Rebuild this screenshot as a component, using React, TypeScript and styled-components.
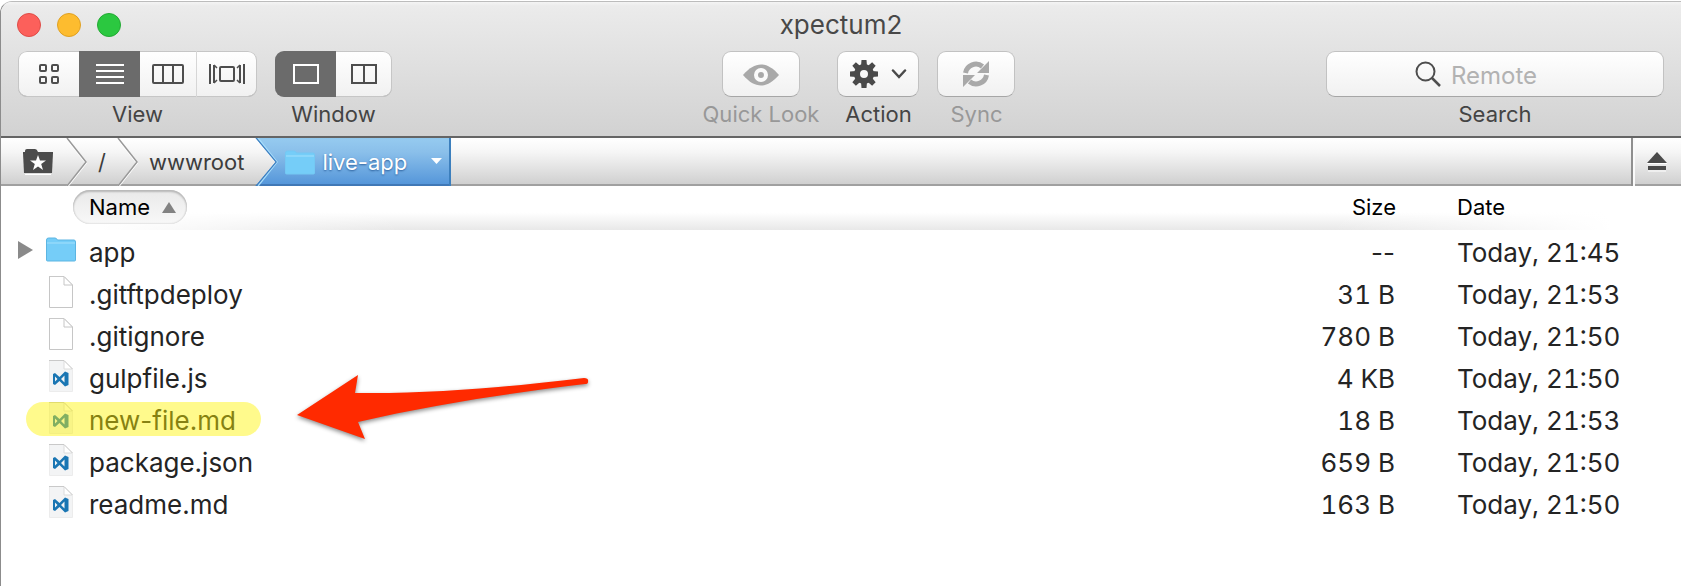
import React from "react";
import styled, { createGlobalStyle, css } from "styled-components";

const GlobalStyle = createGlobalStyle`
  *, *::before, *::after { box-sizing: border-box; }
  body {
    margin: 0;
    background: #fff;
    font-family: Inter, "Liberation Sans", sans-serif;
    color: #242424;
  }
  button, input {
    font: inherit;
    color: inherit;
    margin: 0;
    padding: 0;
    border: 0;
    background: none;
  }
  svg { display: block; flex: none; }
`;

const Window = styled.div`
  min-height: calc(100vh - 1px);
  margin-top: 1px;
  border-left: 1px solid #8c8c8c;
  border-top: 1px solid #bcbcbc;
  border-top-left-radius: 12px;
  overflow: hidden;
  background: #fff;
`;

const Chrome = styled.header`
  padding: 8px 17px 0 17px;
  height: 136px;
  background: linear-gradient(#f4f4f4 0, #ebebeb 4px, #d2d2d2 100%);
  border-bottom: 2px solid #656565;
`;

const TitleBar = styled.div`
  display: grid;
  grid-template-columns: 1fr auto 1fr;
  align-items: center;
  height: 30px;
`;

const Lights = styled.div`
  display: flex;
  gap: 16px;
  margin-left: -1px;
`;

const Light = styled.button<{ $fill: string; $edge: string }>`
  width: 24px;
  height: 24px;
  border-radius: 50%;
  background: ${(p) => p.$fill};
  border: 1px solid ${(p) => p.$edge};
`;

const Title = styled.h1`
  margin: 0;
  font-size: 26px;
  line-height: 30px;
  font-weight: 400;
  color: #484848;
`;

const Toolbar = styled.div`
  display: flex;
  justify-content: space-between;
  padding-top: 11px;
`;

const ToolCluster = styled.div`
  display: flex;
  gap: 18px;
`;

const Tool = styled.div<{ $dim?: boolean }>`
  display: flex;
  flex-direction: column;
  align-items: center;
  gap: 3px;
  color: ${(p) => (p.$dim ? "#989898" : "#444")};
`;

const ToolLabel = styled.label`
  font-size: 22px;
  line-height: 28px;
  white-space: nowrap;
`;

const raised = css`
  height: 46px;
  border: 1px solid #c2c2c2;
  border-bottom-color: #a6a6a6;
  border-radius: 9px;
  background: linear-gradient(#fff, #f1f1f1);
`;

const Segments = styled.div`
  ${raised}
  display: flex;
  overflow: hidden;
  border: 0;
  box-shadow: inset 0 0 0 1px #c6c6c6, inset 0 -1px 0 #a9a9a9;
`;

const Segment = styled.button<{ $on?: boolean; $divided?: boolean; $wide?: boolean }>`
  display: grid;
  place-items: center;
  width: ${(p) => (p.$wide ? 61 : 56)}px;
  color: ${(p) => (p.$on ? "#fff" : "#4e4e4e")};
  background: ${(p) => (p.$on ? "#6b6b6b" : "transparent")};
  border-left: ${(p) => (p.$divided ? "1px solid #d6d6d6" : "0")};
`;

const PushButton = styled.button<{ $wide?: boolean }>`
  ${raised}
  display: flex;
  align-items: center;
  justify-content: center;
  gap: 13px;
  width: ${(p) => (p.$wide ? 82 : 78)}px;
`;

const SearchBox = styled.div`
  ${raised}
  display: flex;
  align-items: center;
  gap: 10px;
  width: 338px;
  padding-left: 88px;
  color: #4e4e4e;

  input {
    flex: 1;
    min-width: 0;
    padding-top: 3px;
    font-size: 24px;
    line-height: 30px;
    outline: none;
  }
  input::placeholder { color: #b2b2b2; opacity: 1; }
`;

const PathBar = styled.nav`
  display: flex;
  height: 48px;
  background: linear-gradient(#fff, #f6f6f6 30%, #d0d0d0);
  border-bottom: 2px solid #a0a0a0;
`;

const Crumb = styled.button<{ $active?: boolean }>`
  display: flex;
  align-items: center;
  height: 48px;
  font-size: 22px;
  line-height: 28px;
  color: #3c3c3c;
  white-space: nowrap;
  ${(p) =>
    p.$active &&
    css`
      gap: 7px;
      padding-right: 7px;
      color: #fff;
      text-shadow: 0 1px 2px #2c609c;
      background: linear-gradient(#8fc8ee 0, #94c9ef 2px, #8abfea 30%, #5294d9);
      border-right: 2px solid #3c7fbd;
      box-shadow: inset 0 -2px 0 #4078b6;
      clip-path: polygon(0 0, 100% 0, 100% 100%, 0 100%, 20px 50%);
    `}
`;

const CrumbText = styled.span<{ $grow?: boolean }>`
  padding: 0 ${(p) => (p.$grow ? 17 : 11)}px 0 ${(p) => (p.$grow ? 0 : 11)}px;
`;

const HomeMark = styled.span`
  padding: 0 13px 0 22px;
`;

const Eject = styled.button`
  display: grid;
  place-items: center;
  width: 50px;
  height: 48px;
  margin-left: auto;
  border-left: 2px solid #8f8f8f;
  box-shadow: inset 2px 0 0 #fafafa;
  color: #4a4a4a;
`;

const Files = styled.table`
  width: 100%;
  border-collapse: collapse;
  table-layout: fixed;
  font-size: 26px;
  line-height: 32px;
`;

const HeadRow = styled.tr`
  height: 44px;
  background:
    linear-gradient(to right, #fff 100px, transparent 400px, transparent calc(100% - 350px), #fff calc(100% - 70px)),
    linear-gradient(#fff 60%, #e8e8e8);
`;

const Head = styled.th<{ $size?: boolean; $date?: boolean }>`
  width: ${(p) => (p.$size ? "220px" : p.$date ? "224px" : "auto")};
  padding: 0 ${(p) => (p.$size ? 61 : 0)}px 2px 0;
  text-align: ${(p) => (p.$size ? "right" : "left")};
  font-size: 22px;
  line-height: 28px;
  font-weight: 400;
  color: #000;
`;

const SortButton = styled.button`
  display: flex;
  align-items: center;
  gap: 12px;
  height: 34px;
  margin-left: 72px;
  padding: 0 11px 0 16px;
  border-radius: 17px;
  background: linear-gradient(#e9e9e9, #f8f8f8);
  box-shadow: inset 0 2px 2px #b8b8b8, inset 0 0 2px #b8b8b8;
`;

const Row = styled.tr`
  height: 42px;
`;

const NameCell = styled.td`
  position: relative;
  padding: 2px 0 0;
`;

const NameLine = styled.div`
  display: flex;
  align-items: center;
  height: 40px;
  padding-left: 16px;
`;

const FileName = styled.span`
  padding-top: 2px;
`;

const Disclosure = styled.span`
  width: 28px;
  padding-bottom: 5px;
`;

const IconSlot = styled.span`
  display: grid;
  place-items: center;
  width: 32px;
  height: 38px;
  margin-right: 12px;
  padding-bottom: 5px;
`;

const SizeCell = styled.td<{ $empty: boolean }>`
  padding: 4px 62px 0 0;
  text-align: right;
  font-variant-numeric: ${(p) => (p.$empty ? "normal" : "tabular-nums")};
`;

const DateCell = styled.td`
  padding: 4px 0 0;
  font-variant-numeric: tabular-nums;
`;

const Highlight = styled.span`
  position: absolute;
  left: 25px;
  top: 4px;
  width: 235px;
  height: 34px;
  border-radius: 17px;
  background: rgba(255, 244, 0, 0.45);
`;

const Pointer = styled.svg`
  position: absolute;
  left: 289px;
  top: -23px;
  overflow: visible;
  filter: drop-shadow(0 2px 2px rgba(0, 0, 0, 0.45));
`;

const GridIcon = () => (
  <svg width="22" height="22" fill="none" stroke="currentColor" strokeWidth="2">
    <rect x="2" y="2" width="6" height="6" rx="1" />
    <rect x="14" y="2" width="6" height="6" rx="1" />
    <rect x="2" y="14" width="6" height="6" rx="1" />
    <rect x="14" y="14" width="6" height="6" rx="1" />
  </svg>
);

const ListIcon = () => (
  <svg width="28" height="22" stroke="currentColor" strokeWidth="2">
    <path d="M0 2H28M0 8H28M0 14H28M0 20H28" />
  </svg>
);

const ColumnsIcon = () => (
  <svg width="32" height="22" fill="none" stroke="currentColor" strokeWidth="2">
    <rect x="1" y="2" width="30" height="18" rx="1" />
    <path d="M11 2V20M21 2V20" />
  </svg>
);

const FlowIcon = () => (
  <svg width="36" height="22" fill="none" stroke="currentColor" strokeWidth="2">
    <rect x="11" y="4" width="14" height="14" rx="1" />
    <path d="M1 1V21M35 1V21M5 2V20M31 2V20" />
    <path d="M5 2l3 3M5 20l3-3M31 2l-3 3M31 20l-3-3" strokeWidth="1.500" />
  </svg>
);

const SinglePaneIcon = () => (
  <svg width="26" height="22" fill="none" stroke="currentColor" strokeWidth="2">
    <rect x="1" y="2" width="24" height="18" />
  </svg>
);

const DualPaneIcon = () => (
  <svg width="26" height="22" fill="none" stroke="currentColor" strokeWidth="2">
    <rect x="1" y="2" width="24" height="18" />
    <path d="M13 2V20" />
  </svg>
);

const EyeIcon = () => (
  <svg width="36" height="24" fill="none">
    <path d="M0 13C6 6 12 2.500 18 2.500S30 6 36 13C30 20 24 23.500 18 23.500S6 20 0 13Z" fill="#a9a9a9" />
    <circle cx="18" cy="13" r="5" stroke="#fbfbfb" strokeWidth="4" fill="#a9a9a9" />
  </svg>
);

const GearIcon = () => (
  <svg width="28" height="28" viewBox="-14 -14 28 28" fill="none">
    <circle r="7" stroke="#4a4a4a" strokeWidth="6" />
    {[0, 45, 90, 135].map((a) => (
      <path key={a} d="M-3 -8L-2.500 -14H2.500L3 -8ZM-3 8L-2.500 14H2.500L3 8Z" fill="#4a4a4a" transform={`rotate(${a})`} />
    ))}
  </svg>
);

const ChevronDown = () => (
  <svg width="16" height="10" fill="none" stroke="#4a4a4a" strokeWidth="2.500" strokeLinecap="round">
    <path d="M2 1.500L8 8L14 1.500" />
  </svg>
);

const SyncIcon = () => (
  <svg width="28" height="28" fill="none" stroke="#a9a9a9" strokeWidth="5">
    <path d="M3.500 13A10.500 10.500 0 0 1 20.500 6.500" />
    <path d="M24.500 15A10.500 10.500 0 0 1 7.500 21.500" />
    <path d="M27 1V13H15Z M1 27V15H13Z" fill="#a9a9a9" stroke="none" />
  </svg>
);

const SearchIcon = () => (
  <svg width="26" height="26" fill="none" stroke="currentColor" strokeWidth="2">
    <circle cx="10.500" cy="10.500" r="9" />
    <path d="M17 17L25 25" strokeWidth="2.500" />
  </svg>
);

const StarFolderIcon = () => (
  <svg width="30" height="26">
    <path d="M2 26V25H28V26Z" fill="#fff" />
    <path d="M2 3V2Q2 0 4 0H12Q14 0 15 3H30V5H0V3Z" fill="#4c4c4c" />
    <path d="M0 4H30L29 24H1Z" fill="#4c4c4c" />
    <path d="M15 6L17 11.500H23L18.200 15L20 21L15 17.500L10 21L11.800 15L7 11.500H13Z" fill="#fff" />
  </svg>
);

const Separator = () => (
  <svg width="21" height="48" fill="none">
    <path d="M1 1L20 25L1 49" stroke="#fff" strokeWidth="2" />
    <path d="M1 0L20 24L1 48" stroke="#999" strokeWidth="1.500" />
  </svg>
);

const ActiveEdge = () => (
  <svg width="23" height="48" fill="none">
    <path d="M3 0L22 24L3 48" stroke="#a5dcfb" strokeWidth="1.500" />
    <path d="M0 0L20 24L0 48" stroke="#3e7fc0" strokeWidth="3" />
  </svg>
);

const FolderIcon = ({ edge }: { edge: string }) => (
  <svg width="30" height="25">
    <path d="M0.500 3Q0.500 1 2.500 1H9Q10.500 1 11.500 3H28Q29.500 3 29.500 5V23Q29.500 24 28.500 24H1.500Q0.500 24 0.500 23Z" fill="#75cdf8" stroke={edge} />
    <path d="M1 6H29" stroke="#a4e0fc" strokeWidth="1" />
  </svg>
);

const CaretDown = () => (
  <svg width="11" height="8">
    <path d="M0 0H11L5.500 6Z" fill="#fff" />
  </svg>
);

const EjectIcon = () => (
  <svg width="20" height="20">
    <path d="M10 0L20 11H0Z" fill="currentColor" />
    <path d="M1 14H19V18H1Z" fill="currentColor" />
    <path d="M0 11.500H20M1 19H19" stroke="#fff" />
  </svg>
);

const SortArrow = () => (
  <svg width="14" height="11">
    <path d="M7 0L14 11H0Z" fill="#828282" />
  </svg>
);

const DisclosureArrow = () => (
  <svg width="16" height="18">
    <path d="M1 0L16 9L1 18Z" fill="#8a8a8a" />
  </svg>
);

const DocumentIcon = ({ code }: { code?: boolean }) => (
  <svg width="24" height="32" fill="none">
    <path
      d="M0.500 0.500H15L23.500 9V31.500H0.500Z"
      fill={code ? "#f3f4f5" : "#fff"}
      stroke={code ? "#ececec" : "#c6c6c6"}
    />
    <path d="M15 1V9H23" fill="#fff" stroke={code ? "#dcdcdc" : "#c6c6c6"} />
    <path d="M0 0.500H15L23.500 9" stroke="#c9c9c9" />
    {code && (
      <path
        fillRule="evenodd"
        fill="#1a76b3"
        d="M4 14L6 13L10.500 17L16 11.500L19.500 13V25L16 26.500L10.500 21L6 25L4 24ZM6 16.500V21.500L8.500 19ZM15.500 15.500L12 19L15.500 22.500Z"
      />
    )}
  </svg>
);

type Kind = "folder" | "plain" | "code";
type Entry = { name: string; kind: Kind; size: string; date: string; marked?: boolean };

const entries: Entry[] = [
  { name: "app", kind: "folder", size: "--", date: "Today, 21:45" },
  { name: ".gitftpdeploy", kind: "plain", size: "31 B", date: "Today, 21:53" },
  { name: ".gitignore", kind: "plain", size: "780 B", date: "Today, 21:50" },
  { name: "gulpfile.js", kind: "code", size: "4 KB", date: "Today, 21:50" },
  { name: "new-file.md", kind: "code", size: "18 B", date: "Today, 21:53", marked: true },
  { name: "package.json", kind: "code", size: "659 B", date: "Today, 21:50" },
  { name: "readme.md", kind: "code", size: "163 B", date: "Today, 21:50" },
];

const FileRow = ({ name, kind, size, date, marked }: Entry) => (
  <Row>
    <NameCell>
      <NameLine>
        <Disclosure>
          {kind === "folder" && (
            <button aria-label={`Expand ${name}`}>
              <DisclosureArrow />
            </button>
          )}
        </Disclosure>
        <IconSlot>
          {kind === "folder" ? <FolderIcon edge="#5cb5e2" /> : <DocumentIcon code={kind === "code"} />}
        </IconSlot>
        <FileName>{name}</FileName>
      </NameLine>
      {marked && (
        <>
          <Highlight />
          <Pointer width="300" height="66" aria-hidden="true">
            <path
              d="M7 31L68 -9L65 9C140 10 210 4 294 -6Q299 -6 298 -2Q298 0 295 0C220 9 140 21 68 38L75 55Z"
              transform="translate(0 9)"
              fill="#ff2a00"
            />
          </Pointer>
        </>
      )}
    </NameCell>
    <SizeCell $empty={size === "--"}>{size}</SizeCell>
    <DateCell>{date}</DateCell>
  </Row>
);

export default function App() {
  return (
    <Window>
      <GlobalStyle />
      <Chrome>
        <TitleBar>
          <Lights>
            <Light $fill="#fc605b" $edge="#de4c47" aria-label="Close" />
            <Light $fill="#fdbc2f" $edge="#dfa023" aria-label="Minimize" />
            <Light $fill="#2bc840" $edge="#24a934" aria-label="Zoom" />
          </Lights>
          <Title>xpectum2</Title>
        </TitleBar>
        <Toolbar>
          <ToolCluster>
            <Tool>
              <Segments>
                <Segment $wide aria-label="Icons"><GridIcon /></Segment>
                <Segment $wide $on aria-label="List"><ListIcon /></Segment>
                <Segment aria-label="Columns"><ColumnsIcon /></Segment>
                <Segment $wide $divided aria-label="Cover flow"><FlowIcon /></Segment>
              </Segments>
              <ToolLabel as="span">View</ToolLabel>
            </Tool>
            <Tool>
              <Segments>
                <Segment $wide $on aria-label="Single pane"><SinglePaneIcon /></Segment>
                <Segment aria-label="Dual pane"><DualPaneIcon /></Segment>
              </Segments>
              <ToolLabel as="span">Window</ToolLabel>
            </Tool>
          </ToolCluster>
          <ToolCluster>
            <Tool $dim>
              <PushButton id="look"><EyeIcon /></PushButton>
              <ToolLabel htmlFor="look">Quick Look</ToolLabel>
            </Tool>
            <Tool>
              <PushButton $wide id="action"><GearIcon /><ChevronDown /></PushButton>
              <ToolLabel htmlFor="action">Action</ToolLabel>
            </Tool>
            <Tool $dim>
              <PushButton id="sync"><SyncIcon /></PushButton>
              <ToolLabel htmlFor="sync">Sync</ToolLabel>
            </Tool>
          </ToolCluster>
          <Tool>
            <SearchBox>
              <SearchIcon />
              <input id="search" type="text" placeholder="Remote" />
            </SearchBox>
            <ToolLabel htmlFor="search">Search</ToolLabel>
          </Tool>
        </Toolbar>
      </Chrome>
      <PathBar>
        <Crumb aria-label="Favorites">
          <HomeMark><StarFolderIcon /></HomeMark>
          <Separator />
        </Crumb>
        <Crumb>
          <CrumbText>/</CrumbText>
          <Separator />
        </Crumb>
        <Crumb>
          <CrumbText>wwwroot</CrumbText>
        </Crumb>
        <Crumb $active>
          <ActiveEdge />
          <FolderIcon edge="#74c8f3" />
          <CrumbText $grow>live-app</CrumbText>
          <CaretDown />
        </Crumb>
        <Eject aria-label="Eject"><EjectIcon /></Eject>
      </PathBar>
      <Files>
        <thead>
          <HeadRow>
            <Head><SortButton>Name <SortArrow /></SortButton></Head>
            <Head $size>Size</Head>
            <Head $date>Date</Head>
          </HeadRow>
        </thead>
        <tbody>
          {entries.map((e) => (
            <FileRow key={e.name} {...e} />
          ))}
        </tbody>
      </Files>
    </Window>
  );
}
